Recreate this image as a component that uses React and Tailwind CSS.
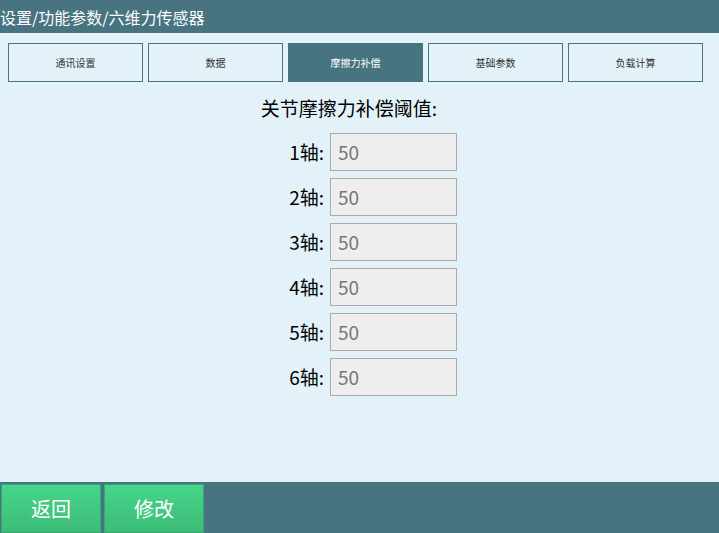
export default function App() {
  const font = { fontFamily: '"Noto Sans CJK SC", "Noto Sans", sans-serif' };
  const tabs = ["通讯设置", "数据", "摩擦力补偿", "基础参数", "负载计算"];
  const axes = ["1轴:", "2轴:", "3轴:", "4轴:", "5轴:", "6轴:"];
  return (
    <div className="w-[719px] h-[533px] bg-[#e3f2f8] flex flex-col overflow-hidden" style={font}>
      <div className="h-[33px] bg-[#477480] flex items-center text-white text-[16px] leading-none shrink-0">
        设置/功能参数/六维力传感器
      </div>
      <div className="flex gap-[5px] pl-[8px] pt-[10px]">
        {tabs.map((t, i) => (
          <div
            key={t}
            className={
              "w-[135px] h-[39px] flex items-center justify-center text-[10px] border " +
              (i === 2
                ? "bg-[#477480] border-[#477480] text-white"
                : "border-[#477480] text-[#333]")
            }
          >
            {t}
          </div>
        ))}
      </div>
      <div className="flex-1 flex flex-col items-center">
        <div className="mt-[14px] mr-[21px] text-[19px] leading-[24px] text-black">关节摩擦力补偿阈值:</div>
        <div className="mt-[13px] flex flex-col gap-[7px] ml-[8px]">
          {axes.map((a) => (
            <div key={a} className="flex items-center">
              <div className="w-[60px] text-right pr-[6px] text-[19px] text-black">{a}</div>
              <div className="w-[127px] h-[38px] bg-[#eeeeee] border border-[#aaaaaa] flex items-center pl-[7px] text-[19px] text-[#777]">
                50
              </div>
            </div>
          ))}
        </div>
      </div>
      <div className="h-[51px] bg-[#477480] flex gap-[3px] pl-[1px] pt-[2px] shrink-0">
        {["返回", "修改"].map((b) => (
          <div
            key={b}
            className="w-[100px] h-full bg-gradient-to-b from-[#47d48b] to-[#3cbd77] border border-[#3aa86d] flex items-center justify-center text-white text-[20px]"
          >
            {b}
          </div>
        ))}
      </div>
    </div>
  );
}
